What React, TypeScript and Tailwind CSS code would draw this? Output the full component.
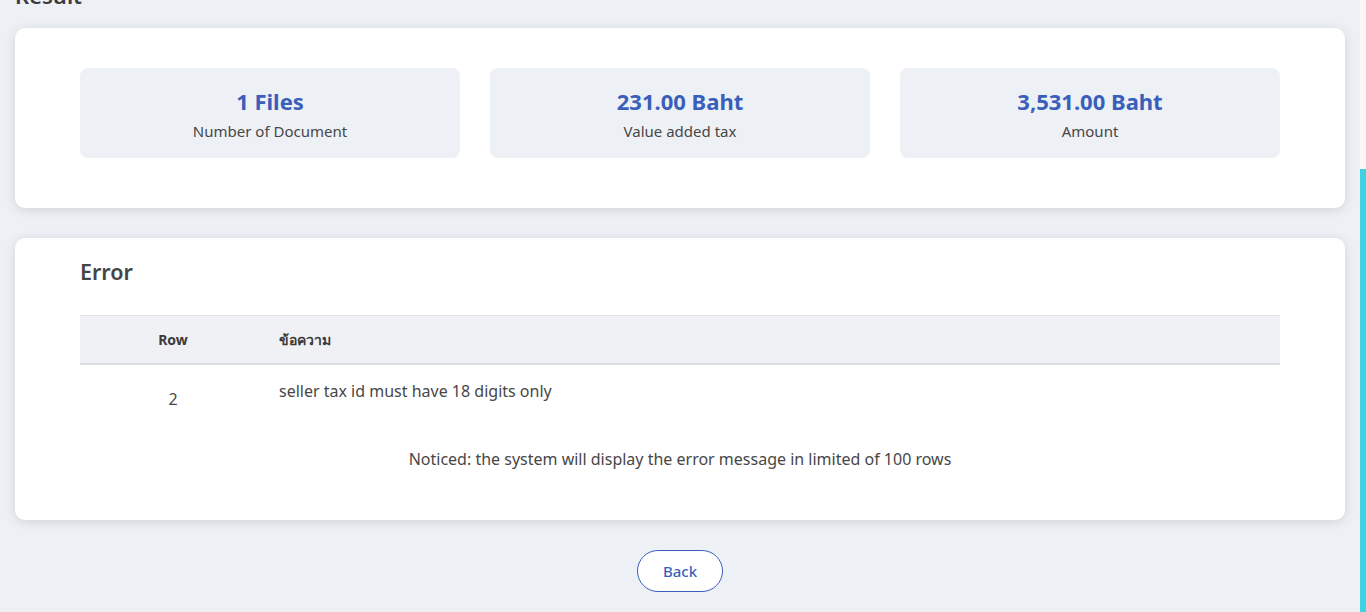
const stats = [
  { value: '1 Files', label: 'Number of Document' },
  { value: '231.00 Baht', label: 'Value added tax' },
  { value: '3,531.00 Baht', label: 'Amount' },
];

const errors = [{ row: 2, message: 'seller tax id must have 18 digits only' }];

export default function App() {
  return (
    <div
      className="flex min-h-screen bg-[#edf0f5] text-[#474747]"
      style={{ fontFamily: '"Noto Sans", "Open Sans", sans-serif' }}
    >
      <main className="flex-1 px-[15px] pb-[20px]">
        {/* page heading, mostly scrolled out of view */}
        <h2 className="-mt-[20px] mb-[18px] text-[22px] font-semibold leading-[30px] text-[#3c3c3c]">Result</h2>

        {/* summary */}
        <section className="rounded-[10px] bg-white px-[65px] pt-[40px] pb-[50px] shadow-[0_2px_12px_rgba(0,0,0,0.12)]">
          <div className="grid grid-cols-3 gap-[30px]">
            {stats.map((s) => (
              <div key={s.label} className="flex h-[90px] flex-col items-center gap-[6px] rounded-[8px] bg-[#edf0f5] pt-[19px]">
                <div className="text-[22px] font-bold leading-[28px] text-[#3a5fba]">{s.value}</div>
                <div className="text-[15px] leading-[20px] text-[#474747]">{s.label}</div>
              </div>
            ))}
          </div>
        </section>

        {/* errors */}
        <section className="mt-[30px] rounded-[10px] bg-white px-[65px] pt-[19px] pb-[51px] shadow-[0_2px_12px_rgba(0,0,0,0.12)]">
          <h3 className="text-[21.5px] font-semibold leading-[30px] text-[#454545]">Error</h3>

          <div className="mt-[28px]">
            <div className="flex h-[50px] items-center border-t border-b-2 border-t-[#e0e2e6] border-b-[#dadde2] bg-[#f0f1f5] text-[14px] font-bold text-[#3a3a3a]">
              <div className="w-[186px] text-center">Row</div>
              <div className="pl-[13px]">ข้อความ</div>
            </div>
            {errors.map((e) => (
              <div key={e.row} className="flex h-[60px] items-start text-[16px] leading-[20px]">
                <div className="w-[186px] pt-[24px] text-center">{e.row}</div>
                <div className="pl-[13px] pt-[16px]">{e.message}</div>
              </div>
            ))}
          </div>

          <p className="mt-[24px] text-center text-[16px] leading-[20px]">
            Noticed: the system will display the error message in limited of 100 rows
          </p>
        </section>

        <div className="mt-[30px] flex justify-center">
          <button className="h-[42px] w-[86px] rounded-full border border-[#3a5fba] bg-white text-[15px] font-medium text-[#3a5fba]">
            Back
          </button>
        </div>
      </main>

      {/* side strip */}
      <div className="flex w-[6px] flex-col">
        <div className="h-[169px] bg-[#fdf6f6]" />
        <div className="flex-1 bg-[#3fd2e3]" />
      </div>
    </div>
  );
}
